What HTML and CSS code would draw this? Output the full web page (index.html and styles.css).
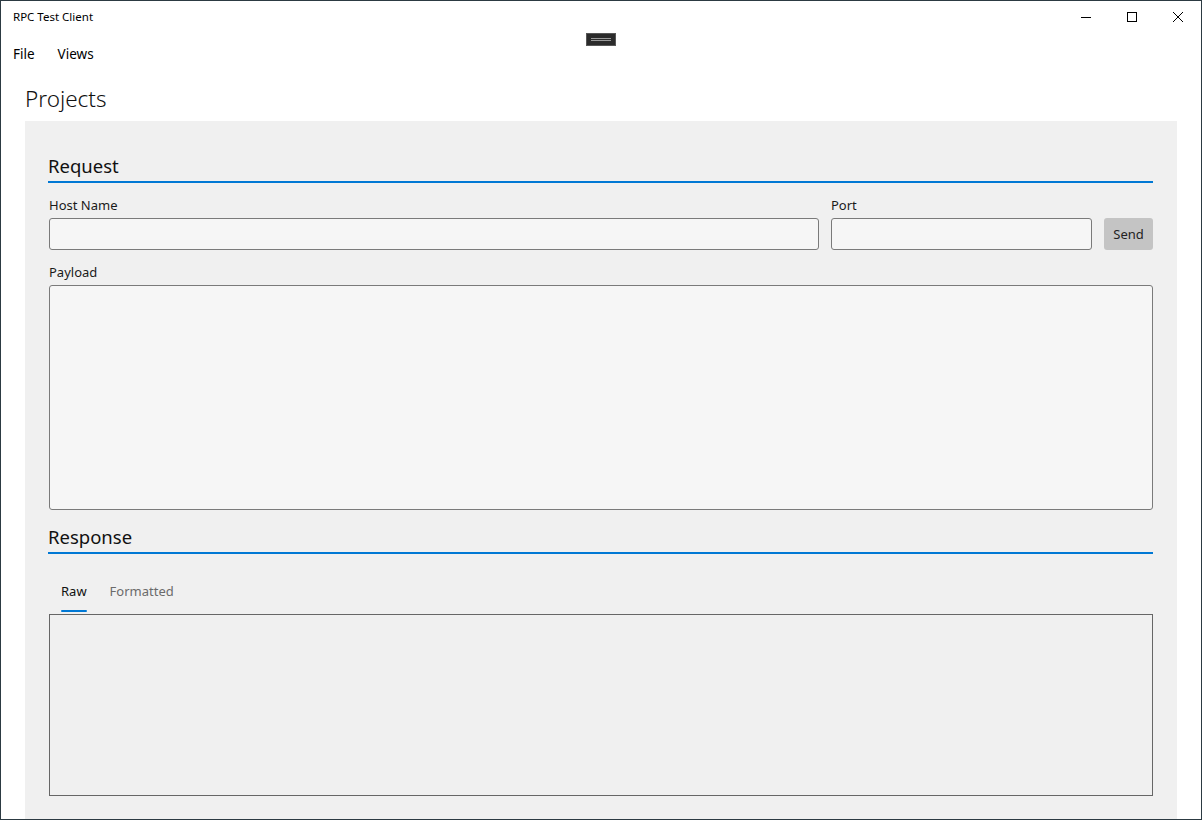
FILE: index.html
```html
<!DOCTYPE html>
<html>
<head>
<meta charset="utf-8">
<title>RPC Test Client</title>
<link rel="stylesheet" href="styles.css">
</head>
<body>
<div class="window">
  <div class="titlebar">
    <div class="title">RPC Test Client</div>
    <div class="captions">
      <div class="cap"><svg width="10" height="10" viewBox="0 0 10 10"><path d="M0 5.5H10" stroke="#000" stroke-width="1"/></svg></div>
      <div class="cap"><svg width="10" height="10" viewBox="0 0 10 10"><rect x="0.5" y="0.5" width="9" height="9" fill="none" stroke="#000" stroke-width="1"/></svg></div>
      <div class="cap"><svg width="10" height="10" viewBox="0 0 10 10"><path d="M0 0L10 10M10 0L0 10" stroke="#000" stroke-width="1"/></svg></div>
    </div>
  </div>
  <div class="handle"><span></span><span></span></div>
  <div class="menubar">
    <span class="menu-item">File</span>
    <span class="menu-item">Views</span>
  </div>
  <div class="page-title">Projects</div>
  <div class="panel">
    <div class="section-head">Request</div>
    <div class="fields">
      <div class="field">
        <label class="label">Host Name</label>
        <div class="input"></div>
      </div>
      <div class="field">
        <label class="label">Port</label>
        <div class="input"></div>
      </div>
      <div class="field send-field">
        <div class="button">Send</div>
      </div>
    </div>
    <div class="field payload">
      <label class="label">Payload</label>
      <div class="input textarea"></div>
    </div>
    <div class="section-head response-head">Response</div>
    <div class="tabs">
      <div class="tab active">Raw</div>
      <div class="tab">Formatted</div>
    </div>
    <div class="response-box"></div>
  </div>
</div>
</body>
</html>
```

FILE: styles.css
```css
* { box-sizing: border-box; }
html, body { margin: 0; padding: 0; background: #fff; }
body {
  font-family: "Noto Sans", "Open Sans", "Liberation Sans", sans-serif;
  color: #000;
}
.window {
  position: relative;
  width: 1202px;
  height: 820px;
  border: 1px solid #2c3a42;
  background: #fff;
  display: flex;
  flex-direction: column;
  overflow: hidden;
}
.titlebar {
  height: 31px;
  display: flex;
  align-items: center;
  justify-content: space-between;
  flex-shrink: 0;
}
.title {
  padding-left: 12px;
  font-size: 11.5px;
  line-height: 16px;
  margin-top: 1px;
}
.captions { display: flex; height: 31px; margin-right: 0; }
.cap {
  width: 46px;
  height: 31px;
  display: flex;
  align-items: center;
  justify-content: center;
}
.cap svg { display: block; }
.handle {
  position: absolute;
  left: 585px;
  top: 32px;
  width: 30px;
  height: 13px;
  background: #2b2b2b;
  border: 1px solid #575757;
  display: flex;
  flex-direction: column;
  justify-content: center;
  align-items: center;
  gap: 1px;
}
.handle span {
  display: block;
  width: 20px;
  height: 1px;
  background: #9a9a9a;
}
.menubar {
  height: 44px;
  display: flex;
  align-items: center;
  padding-left: 12px;
  flex-shrink: 0;
}
.menu-item {
  font-size: 13.5px;
  line-height: 20px;
  margin-right: 23px;
}
.page-title {
  font-size: 22.5px;
  line-height: 32px;
  padding: 7px 0 0 24px;
  margin-bottom: 6px;
  font-weight: 300;
  color: #111;
  flex-shrink: 0;
}
.panel {
  flex: 1;
  margin: 0 24px 0 24px;
  background: #f0f0f0;
  padding: 31px 24px 0 23px;
  display: flex;
  flex-direction: column;
}
.section-head {
  font-size: 18.5px;
  line-height: 28px;
  padding-bottom: 1px;
  border-bottom: 2px solid #0078d4;
  color: #111;
}
.fields {
  display: grid;
  grid-template-columns: 1fr 261px 49px;
  column-gap: 12px;
  margin-top: 12px;
  padding-left: 1px;
}
.field { display: flex; flex-direction: column; }
.label {
  font-size: 13px;
  line-height: 20px;
  margin-bottom: 3px;
  color: #1a1a1a;
}
.input {
  height: 32px;
  background: #f6f6f6;
  border: 1px solid #7a7a7a;
  border-radius: 3px;
}
.send-field { justify-content: flex-end; }
.button {
  height: 32px;
  background: #c4c4c4;
  border-radius: 3px;
  font-size: 13px;
  line-height: 32px;
  text-align: center;
  color: #222;
}
.payload { margin-top: 12px; padding-left: 1px; }
.textarea { height: 225px; }
.response-head { margin-top: 13px; }
.tabs {
  display: flex;
  margin-top: 27px;
  padding-left: 13px;
  gap: 23px;
}
.tab {
  font-size: 13px;
  line-height: 20px;
  color: #6b6b6b;
  padding-bottom: 11px;
  position: relative;
}
.tab.active { color: #111; }
.tab.active::after {
  content: "";
  position: absolute;
  left: 0;
  right: 0;
  bottom: 0;
  height: 2px;
  border-radius: 1px;
  background: #0078d4;
}
.response-box {
  margin-top: 2px;
  margin-left: 1px;
  height: 182px;
  border: 1px solid #666;
  background: #f0f0f0;
}
```
